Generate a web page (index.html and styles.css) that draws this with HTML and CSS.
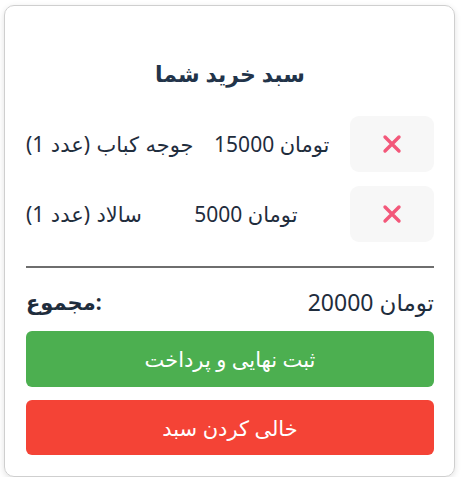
FILE: index.html
```html
<!DOCTYPE html>
<html lang="fa">
<head>
<meta charset="utf-8">
<title>سبد خرید</title>
<link rel="stylesheet" href="styles.css">
</head>
<body>
<div class="cart">
  <h2 class="cart-title">سبد خرید شما</h2>
  <ul class="cart-items">
    <li class="cart-item">
      <span class="item-name">جوجه کباب <span class="qty">(1 عدد)</span></span>
      <span class="item-price">15000 تومان</span>
      <button class="remove-btn" aria-label="حذف">
        <svg viewBox="0 0 24 24" width="24" height="24"><path d="M5 5L19 19M19 5L5 19" stroke="#f3587a" stroke-width="3.4" stroke-linecap="round" fill="none"/></svg>
      </button>
    </li>
    <li class="cart-item">
      <span class="item-name">سالاد <span class="qty">(1 عدد)</span></span>
      <span class="item-price">5000 تومان</span>
      <button class="remove-btn" aria-label="حذف">
        <svg viewBox="0 0 24 24" width="24" height="24"><path d="M5 5L19 19M19 5L5 19" stroke="#f3587a" stroke-width="3.4" stroke-linecap="round" fill="none"/></svg>
      </button>
    </li>
  </ul>
  <hr class="divider">
  <div class="total-row">
    <span class="total-label">مجموع:</span>
    <span class="total-value">20000 تومان</span>
  </div>
  <button class="btn btn-checkout">ثبت نهایی و پرداخت</button>
  <button class="btn btn-clear">خالی کردن سبد</button>
</div>
</body>
</html>
```
FILE: styles.css
```css
html, body {
  margin: 0;
  padding: 0;
  background: #ffffff;
}
body {
  font-family: "Segoe UI", "Noto Sans", "DejaVu Sans", sans-serif;
  color: #1f2d3d;
  padding: 5px 0 0 4px;
}
.cart {
  box-sizing: border-box;
  width: 451px;
  height: 472px;
  border: 1px solid #cfcfcf;
  border-radius: 10px;
  box-shadow: 0 2px 6px rgba(0, 0, 0, 0.12);
  padding: 20px 20px 21px 21px;
  display: flex;
  flex-direction: column;
}
.cart-title {
  margin: 32px 0 28px;
  text-align: center;
  font-size: 22px;
  line-height: 30px;
  font-weight: 700;
  color: #22344a;
  direction: rtl;
}
.cart-items {
  list-style: none;
  margin: 0;
  padding: 0;
  display: flex;
  flex-direction: column;
  gap: 14px;
}
.cart-item {
  display: flex;
  align-items: center;
  justify-content: space-between;
  height: 56px;
  font-size: 21px;
}
.item-name {
  direction: rtl;
  unicode-bidi: isolate;
  word-spacing: 1px;
}
.qty {
  display: inline-block;
  direction: ltr;
}
.remove-btn {
  width: 84px;
  height: 56px;
  border: none;
  border-radius: 9px;
  background: #f7f7f7;
  display: flex;
  align-items: center;
  justify-content: center;
  padding: 0;
}
.divider {
  margin: 24px 0 0;
  border: none;
  height: 2px;
  background: #6e6e6e;
}
.total-row {
  display: flex;
  justify-content: space-between;
  align-items: center;
  margin-top: 20px;
  height: 28px;
  font-size: 23px;
}
.total-label {
  font-weight: 700;
  font-size: 21px;
}
.btn {
  border: none;
  border-radius: 6px;
  color: #ffffff;
  font-family: inherit;
  font-size: 21px;
  height: 56px;
  width: 100%;
  direction: rtl;
}
.btn-checkout {
  margin-top: 15px;
  background: #4caf50;
}
.btn-clear {
  margin-top: 13px;
  height: 55px;
  background: #f44336;
}
```
